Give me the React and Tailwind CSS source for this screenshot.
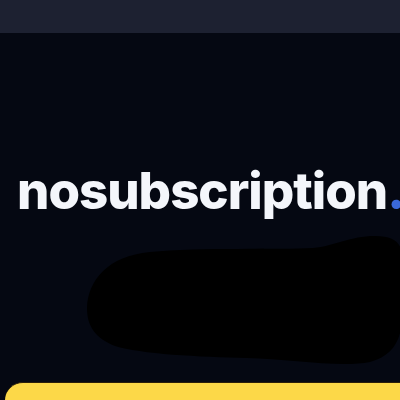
import React from 'react';

// Hero section for nosubscription landing (top of page, cropped)
const App = () => {
  return (
    <div className="w-[400px] h-[400px] overflow-hidden bg-[#050812] flex flex-col" style={{ fontFamily: 'Inter, "Liberation Sans", sans-serif' }}>
      {/* top nav strip */}
      <div className="h-[33px] bg-[#1d2131] shrink-0" />

      {/* title */}
      <div className="pt-[132px] pl-[17px] shrink-0">
        <h1 className="text-[51px] leading-none font-extrabold tracking-[-1px] text-[#f4f6fb] whitespace-nowrap">
          nosubscription<span className="text-[#3a68da]">.</span>
        </h1>
      </div>

      {/* redacted line */}
      <div className="h-[166px] shrink-0 relative">
        <svg className="absolute left-0 top-0" width="400" height="166" viewBox="0 0 400 166">
          <path
            d="M87 92 C88 64 108 40 150 36 C200 31 280 34 313 32 C335 30 350 20 375 20 C395 20 402 28 402 40 L402 100 C402 125 392 140 370 146 C340 152 290 143 247 142 C200 141 140 138 115 130 C95 122 87 110 87 92 Z"
            fill="#000000"
          />
        </svg>
      </div>

      {/* yellow card */}
      <div className="ml-[5px] flex-1 bg-[#fcd848] rounded-tl-[26px] border-t border-[#2a1e0a]" />
    </div>
  );
};

export default App;
